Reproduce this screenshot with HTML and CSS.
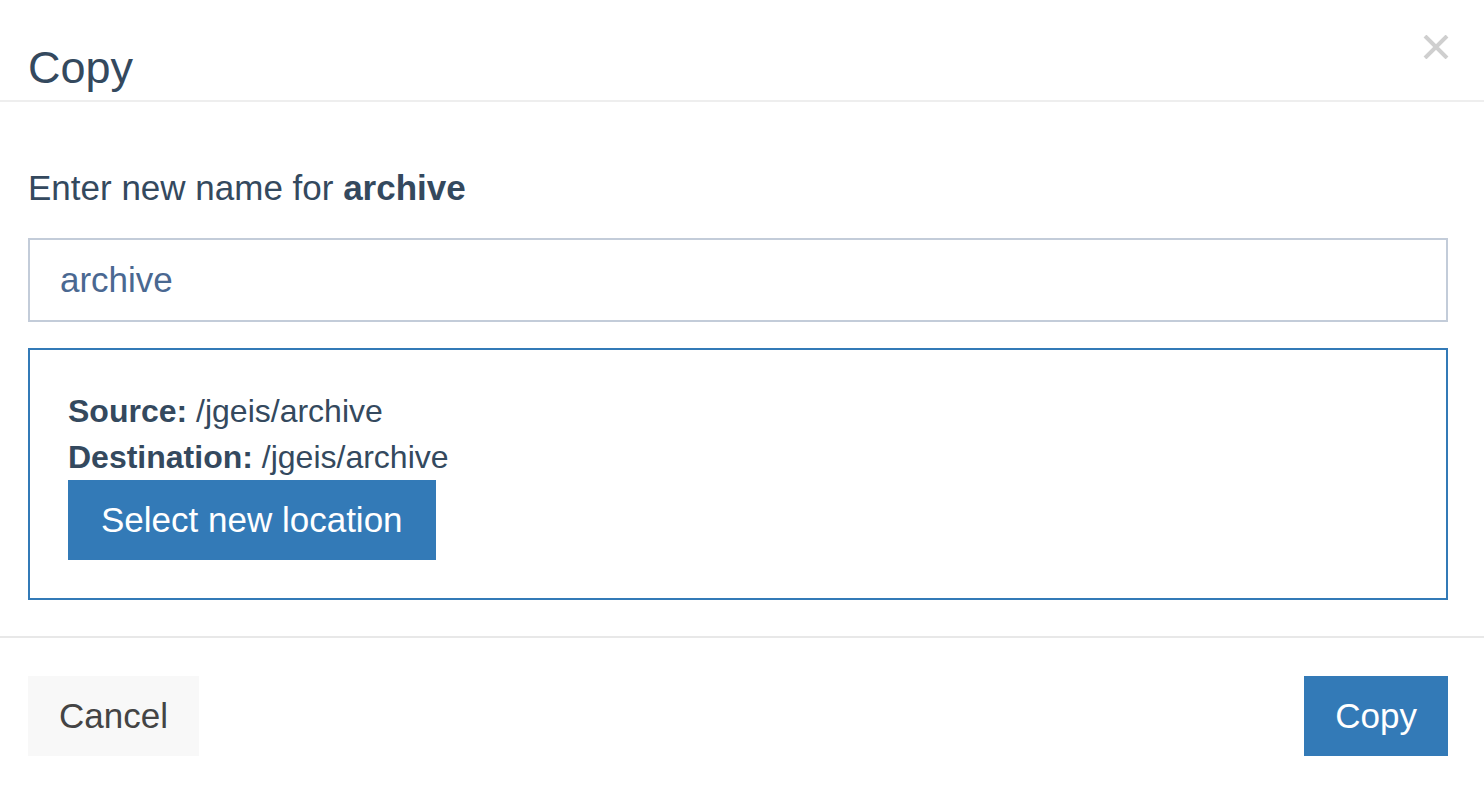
FILE: index.html
```html
<!DOCTYPE html>
<html lang="en">
<head>
<meta charset="utf-8">
<title>Copy</title>
<link rel="stylesheet" href="styles.css">
</head>
<body>
<div class="modal">
  <header class="modal-header">
    <h1 class="modal-title">Copy</h1>
    <button class="close" aria-label="Close">
      <svg width="26" height="24" viewBox="0 0 26 24"><path d="M2 1 L24 23 M24 1 L2 23" stroke="#cfcfcf" stroke-width="4" fill="none"/></svg>
    </button>
  </header>
  <section class="modal-body">
    <label class="label" for="name">Enter new name for <strong>archive</strong></label>
    <input id="name" class="name-input" type="text" value="archive">
    <div class="location-box">
      <div class="line"><strong>Source:</strong> /jgeis/archive</div>
      <div class="line"><strong>Destination:</strong> /jgeis/archive</div>
      <button class="btn btn-primary btn-select">Select new location</button>
    </div>
  </section>
  <footer class="modal-footer">
    <button class="btn btn-default">Cancel</button>
    <button class="btn btn-primary">Copy</button>
  </footer>
</div>
</body>
</html>
```
FILE: styles.css
```css
html, body {
  margin: 0;
  padding: 0;
  background: #fff;
}
body {
  font-family: "Liberation Sans", Arial, sans-serif;
  color: #34495e;
}
.modal {
  width: 1484px;
}
.modal-header {
  height: 58px;
  padding: 42px 36px 0 28px;
  border-bottom: 2px solid #eeeeee;
  display: flex;
  justify-content: space-between;
  align-items: flex-start;
}
.modal-title {
  margin: 0;
  font-size: 45px;
  font-weight: 400;
  line-height: 52px;
  color: #34495e;
}
.close {
  border: 0;
  background: none;
  padding: 0;
  margin-top: -7px;
  margin-right: -1px;
  cursor: pointer;
  line-height: 0;
}
.modal-body {
  padding: 61px 36px 36px 28px;
  display: flex;
  flex-direction: column;
}
.label {
  font-size: 35px;
  line-height: 50px;
  margin-bottom: 25px;
  color: #34495e;
}
.label strong {
  font-weight: 700;
}
.name-input {
  box-sizing: border-box;
  width: 100%;
  height: 84px;
  margin: 0;
  padding: 0 30px;
  border: 2px solid #c3ccd9;
  border-radius: 0;
  font-family: "Liberation Sans", Arial, sans-serif;
  font-size: 35px;
  color: #4a6891;
  outline: none;
}
.location-box {
  margin-top: 26px;
  border: 2px solid #337ab7;
  padding: 38px;
  display: flex;
  flex-direction: column;
  align-items: flex-start;
}
.line {
  font-size: 32px;
  line-height: 46px;
  color: #34495e;
}
.line strong {
  font-weight: 700;
}
.btn {
  border: 0;
  border-radius: 0;
  height: 80px;
  padding: 0 31px;
  font-family: "Liberation Sans", Arial, sans-serif;
  font-size: 35px;
  cursor: pointer;
}
.btn-select {
  padding: 0 33px;
}
.btn-primary {
  background: #337ab7;
  color: #fff;
}
.btn-default {
  background: #f8f8f8;
  color: #444;
}
.modal-footer {
  border-top: 2px solid #e8e8e8;
  padding: 38px 36px 34px 28px;
  display: flex;
  justify-content: space-between;
}
```
